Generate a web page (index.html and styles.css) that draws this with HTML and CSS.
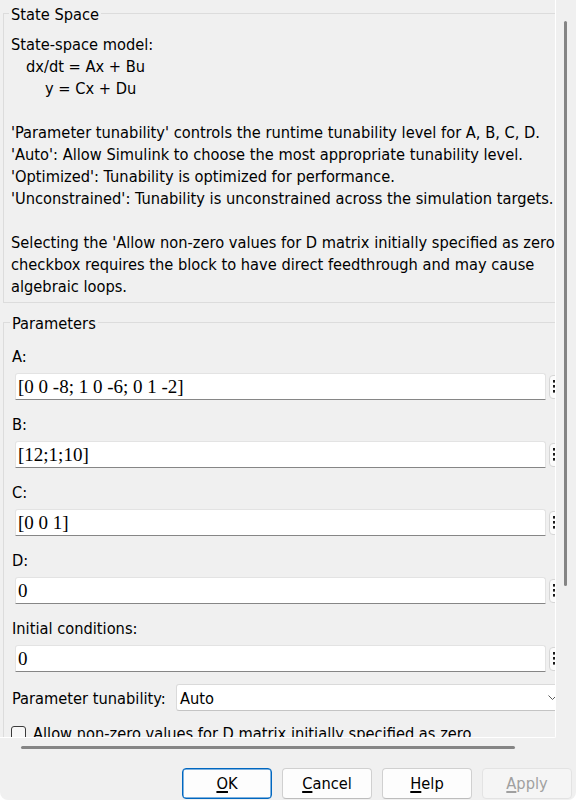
FILE: index.html
```html
<!DOCTYPE html>
<html>
<head>
<meta charset="utf-8">
<title>Block Parameters: State Space</title>
<link rel="stylesheet" href="styles.css">
</head>
<body>
<div class="window">
  <div class="main">
    <div class="viewport">
      <div class="content">
        <fieldset class="group desc">
          <legend>State Space</legend>
          <div class="line">State-space model:</div>
          <div class="line ind1">dx/dt = Ax + Bu</div>
          <div class="line ind2">y = Cx + Du</div>
          <div class="line"></div>
          <div class="line">'Parameter tunability' controls the runtime tunability level for A, B, C, D.</div>
          <div class="line">'Auto': Allow Simulink to choose the most appropriate tunability level.</div>
          <div class="line">'Optimized': Tunability is optimized for performance.</div>
          <div class="line">'Unconstrained': Tunability is unconstrained across the simulation targets.</div>
          <div class="line"></div>
          <div class="line">Selecting the 'Allow non-zero values for D matrix initially specified as zero'</div>
          <div class="line">checkbox requires the block to have direct feedthrough and may cause</div>
          <div class="line">algebraic loops.</div>
        </fieldset>
        <fieldset class="group params">
          <legend>Parameters</legend>
          <div class="param">
            <div class="label">A:</div>
            <div class="field-row">
              <div class="field">[0 0 -8; 1 0 -6; 0 1 -2]</div>
              <div class="dots-btn"><svg width="3" height="13" viewBox="0 0 3 13"><rect x="0" y="0" width="2.4" height="2.6"/><rect x="0" y="5" width="2.4" height="2.6"/><rect x="0" y="10" width="2.4" height="2.6"/></svg></div>
            </div>
          </div>
          <div class="param">
            <div class="label">B:</div>
            <div class="field-row">
              <div class="field">[12;1;10]</div>
              <div class="dots-btn"><svg width="3" height="13" viewBox="0 0 3 13"><rect x="0" y="0" width="2.4" height="2.6"/><rect x="0" y="5" width="2.4" height="2.6"/><rect x="0" y="10" width="2.4" height="2.6"/></svg></div>
            </div>
          </div>
          <div class="param">
            <div class="label">C:</div>
            <div class="field-row">
              <div class="field">[0 0 1]</div>
              <div class="dots-btn"><svg width="3" height="13" viewBox="0 0 3 13"><rect x="0" y="0" width="2.4" height="2.6"/><rect x="0" y="5" width="2.4" height="2.6"/><rect x="0" y="10" width="2.4" height="2.6"/></svg></div>
            </div>
          </div>
          <div class="param">
            <div class="label">D:</div>
            <div class="field-row">
              <div class="field">0</div>
              <div class="dots-btn"><svg width="3" height="13" viewBox="0 0 3 13"><rect x="0" y="0" width="2.4" height="2.6"/><rect x="0" y="5" width="2.4" height="2.6"/><rect x="0" y="10" width="2.4" height="2.6"/></svg></div>
            </div>
          </div>
          <div class="param last">
            <div class="label">Initial conditions:</div>
            <div class="field-row">
              <div class="field">0</div>
              <div class="dots-btn"><svg width="3" height="13" viewBox="0 0 3 13"><rect x="0" y="0" width="2.4" height="2.6"/><rect x="0" y="5" width="2.4" height="2.6"/><rect x="0" y="10" width="2.4" height="2.6"/></svg></div>
            </div>
          </div>
          <div class="tune-row">
            <div class="tune-label">Parameter tunability:</div>
            <div class="select">
              <span class="select-text">Auto</span>
              <svg class="chev" width="9" height="5" viewBox="0 0 9 5"><path d="M0.5 0.5 L4.5 4.5 L8.5 0.5" fill="none" stroke="#5a5a5a" stroke-width="1"/></svg>
            </div>
          </div>
          <div class="check-row">
            <span class="checkbox"></span>
            <span class="check-text">Allow non-zero values for D matrix initially specified as zero</span>
          </div>
        </fieldset>
      </div>
    </div>
    <div class="vscroll"><div class="vthumb"></div></div>
  </div>
  <div class="hscroll"><div class="hthumb"></div></div>
  <div class="buttons">
    <div class="btn default"><u>O</u>K</div>
    <div class="btn"><u>C</u>ancel</div>
    <div class="btn"><u>H</u>elp</div>
    <div class="btn disabled"><u>A</u>pply</div>
  </div>
</div>
</body>
</html>
```

FILE: styles.css
```css
html {
  background: #ffffff;
}
body {
  margin: 0;
  font-family: "DejaVu Sans Condensed", "DejaVu Sans", sans-serif;
  font-size: 16.3px;
  line-height: 22px;
  color: #000;
}
.window {
  width: 576px;
  height: 800px;
  background: #f0f0f0;
  display: flex;
  flex-direction: column;
  border-radius: 0 0 8px 8px;
  overflow: hidden;
}
.main {
  display: flex;
  height: 738px;
  flex: none;
}
.viewport {
  width: 556px;
  height: 738px;
  box-sizing: border-box;
  border-right: 1px solid #ffffff;
  border-bottom: 1px solid #ffffff;
  border-bottom-right-radius: 2px;
  overflow: hidden;
  flex: none;
}
.content {
  width: 640px;
  padding-top: 3px;
}
.group {
  margin: 0 0 0 3px;
  border: 1px solid #dcdcdc;
  min-width: 0;
}
.group legend {
  padding: 3px 2px 0;
  margin-left: -2px;
  line-height: 18px;
}
.desc {
  padding: 10px 0 4px 7px;
}
.line {
  height: 22px;
  white-space: nowrap;
}
.ind1 { padding-left: 15px; }
.ind2 { padding-left: 34px; }

.params {
  margin-top: 9px;
  padding: 13px 0 20px 8px;
}
.param {
  margin-bottom: 14px;
}
.param.last {
  margin-bottom: 12px;
}
.label {
  height: 22px;
  white-space: nowrap;
}
.field-row {
  display: flex;
  align-items: center;
  margin-top: 5px;
  margin-left: 3px;
  gap: 3px;
}
.field {
  width: 531px;
  height: 27px;
  box-sizing: border-box;
  background: #ffffff;
  border: 1px solid #e3e3e3;
  border-bottom-color: #868686;
  border-radius: 3px 3px 0 0;
  padding-left: 2px;
  font-family: "Liberation Serif", "Times New Roman", serif;
  font-size: 19px;
  line-height: 25px;
  white-space: nowrap;
}
.dots-btn {
  width: 20px;
  height: 24px;
  box-sizing: border-box;
  border: 1px solid #d6d6d6;
  border-radius: 4px;
  background: #fbfbfb;
  display: flex;
  align-items: center;
  padding-left: 3px;
}
.dots-btn svg {
  fill: #1a1a1a;
  display: block;
}
.tune-row {
  display: flex;
  align-items: center;
  height: 27px;
}
.tune-label {
  width: 164px;
  flex: none;
  white-space: nowrap;
  padding-top: 2px;
}
.select {
  width: 393px;
  height: 27px;
  box-sizing: border-box;
  background: #ffffff;
  border: 1px solid #dadada;
  border-bottom-color: #c4c4c4;
  border-radius: 3px;
  display: flex;
  align-items: center;
  justify-content: space-between;
  padding: 2px 11px 0 3px;
  flex: none;
}
.chev {
  display: block;
  margin-top: -2px;
}
.check-row {
  display: flex;
  align-items: flex-start;
  margin-top: 12px;
  white-space: nowrap;
}
.checkbox {
  width: 15px;
  height: 15px;
  box-sizing: border-box;
  border: 1px solid #3b3b3b;
  border-radius: 3px;
  background: #f7f7f7;
  margin-top: 3px;
  margin-left: -1px;
  flex: none;
}
.check-text {
  margin-left: 7px;
}

.vscroll {
  width: 20px;
  flex: none;
}
.vthumb {
  margin-top: 21px;
  margin-left: 8px;
  width: 3px;
  height: 565px;
  background: #858585;
  border-radius: 2px;
}
.hscroll {
  height: 30px;
  flex: none;
}
.hthumb {
  margin-top: 8px;
  margin-left: 21px;
  width: 494px;
  height: 3px;
  background: #858585;
  border-radius: 2px;
}
.buttons {
  display: flex;
  gap: 10px;
  padding-left: 182px;
}
.btn {
  width: 90px;
  height: 31px;
  box-sizing: border-box;
  border: 1px solid #d0d0d0;
  border-bottom-color: #bdbdbd;
  border-radius: 4px;
  background: #fdfdfd;
  text-align: center;
  line-height: 29px;
  font-size: 16.3px;
}
.btn u {
  text-decoration-thickness: 2px;
  text-underline-offset: 2px;
}
.btn.default {
  border: 1px solid #0067c0;
  box-shadow: inset 0 0 0 0.5px #0067c0;
}
.btn.disabled {
  background: #f5f5f5;
  border-color: #e3e3e3;
  color: #a0a0a0;
}
```
